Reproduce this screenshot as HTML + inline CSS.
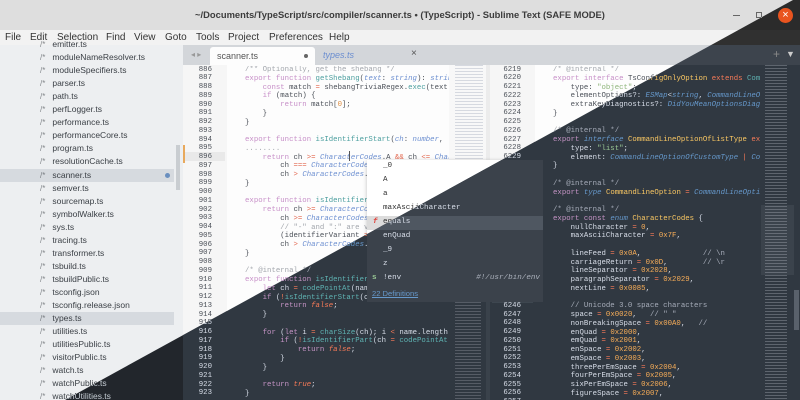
<!DOCTYPE html>
<html><head><meta charset="utf-8"><style>
*{margin:0;padding:0;box-sizing:border-box}
body{width:800px;height:400px;overflow:hidden;position:relative;font-family:"Liberation Sans",sans-serif}
.app{position:absolute;left:0;top:0;width:800px;height:400px;overflow:hidden}
.dark{clip-path:polygon(793px 0,800px 0,800px 400px,65px 400px)}
.abs{position:absolute}
.title{left:0;top:0;width:800px;height:30px;text-align:center;font-weight:bold;font-size:9.4px;line-height:30px}
.menu{left:0;top:30px;width:800px;height:15px;font-size:10px;line-height:15px}
.menu span{position:absolute;top:0}
.side{left:0;top:45px;width:183px;height:355px;font-size:8.5px}
.side div{position:absolute;left:0;width:174px;height:13px;line-height:13px;padding-left:40px;white-space:nowrap}
.side i{font-style:normal;font-size:8px;margin-right:7px;opacity:.6}
.tabs{left:183px;top:45px;width:617px;height:20px;font-size:9px}
.ed{left:183px;top:65px;height:335px}
.code{font-family:"Liberation Mono",monospace;font-size:7.35px;line-height:8.75px;white-space:pre;position:absolute;top:0.6px}
.gut{text-align:right}
.t{font-style:italic}
.pop{left:367px;top:160px;width:176px;height:142px;font-family:"Liberation Mono",monospace;font-size:7.6px}
.pop div{position:absolute;left:0;width:176px;height:13.8px;line-height:13.8px;padding-left:16px;white-space:pre}
.L .title{background:#dedede;color:#3c3c3c}
.L .menu{background:#f2f2f2;color:#333}
.L .side{background:#edeff1;color:#3a3f45}
.L .sel{background:#d6dadf}
.L .tabs{background:#d3d6da;color:#555}
.L .ed{background:#fdfdfd}
.L .gutbg{background:#f6f6f6}
.L .gut{color:#a9a9a9}
.L .code{color:#4b5058}
.L .k{color:#c78fc8}.L .f{color:#4c9f9f}.L .t{color:#6b8ed0}.L .c{color:#a3a7ad}.L .s{color:#8eb57a}.L .n{color:#dd8a3c}.L .o{color:#e2674f}
.L .pop{background:#fff;color:#333;box-shadow:0 1px 4px rgba(0,0,0,.25)}
.L .mini{background:#f8f8f8}
.D .title{background:#2b2b2b;color:#ddd}
.D .menu{background:#303030;color:#ddd}
.D .side{background:#22262c;color:#c5ccd4}
.D .sel{background:#393f47}
.D .tabs{background:#3d444d;color:#bbb}
.D .ed{background:#303841}
.D .gutbg{background:#303841}
.D .gut{color:#7f8893}
.D .code{color:#d8dee9}
.D .k{color:#c594c5}.D .f{color:#5fb3b3}.D .t{color:#6699cc}.D .c{color:#a6acb9}.D .s{color:#99c794}.D .n{color:#f9ae58}.D .o{color:#f97b58}.D .y{color:#fac863}
.D .pop{background:#3b424b;color:#d8dee9}
.D .mini{background:#303841}
</style></head><body>

<div class="app L">
<div class="abs title">~/Documents/TypeScript/src/compiler/scanner.ts • (TypeScript) - Sublime Text (SAFE MODE)</div>
<div class="abs" style="left:733px;top:15px;width:7px;height:1px;background:#666"></div>
<div class="abs" style="left:756px;top:12px;width:6px;height:6px;border:1px solid #666"></div>
<div class="abs" style="left:778px;top:8px;width:15px;height:15px;border-radius:50%;background:#e9541f;color:#fff;font-size:11px;line-height:15px;text-align:center">×</div>
<div class="abs menu"><span style="left:5px">File</span><span style="left:30px">Edit</span><span style="left:57px">Selection</span><span style="left:106px">Find</span><span style="left:134px">View</span><span style="left:165px">Goto</span><span style="left:196px">Tools</span><span style="left:228px">Project</span><span style="left:269px">Preferences</span><span style="left:329px">Help</span></div>
<div class="abs side">
<div style="top:-7px"><i>/*</i>emitter.ts</div>
<div style="top:6px"><i>/*</i>moduleNameResolver.ts</div>
<div style="top:19px"><i>/*</i>moduleSpecifiers.ts</div>
<div style="top:32px"><i>/*</i>parser.ts</div>
<div style="top:45px"><i>/*</i>path.ts</div>
<div style="top:58px"><i>/*</i>perfLogger.ts</div>
<div style="top:71px"><i>/*</i>performance.ts</div>
<div style="top:84px"><i>/*</i>performanceCore.ts</div>
<div style="top:97px"><i>/*</i>program.ts</div>
<div style="top:110px"><i>/*</i>resolutionCache.ts</div>
<div class="sel" style="top:123.5px"><i>/*</i>scanner.ts<b style="position:absolute;left:165px;top:4.5px;width:5px;height:5px;border-radius:50%;background:#6a8fbf"></b></div>
<div style="top:137px"><i>/*</i>semver.ts</div>
<div style="top:150px"><i>/*</i>sourcemap.ts</div>
<div style="top:163px"><i>/*</i>symbolWalker.ts</div>
<div style="top:176px"><i>/*</i>sys.ts</div>
<div style="top:189px"><i>/*</i>tracing.ts</div>
<div style="top:202px"><i>/*</i>transformer.ts</div>
<div style="top:215px"><i>/*</i>tsbuild.ts</div>
<div style="top:228px"><i>/*</i>tsbuildPublic.ts</div>
<div style="top:241px"><i>/*</i>tsconfig.json</div>
<div style="top:254px"><i>/*</i>tsconfig.release.json</div>
<div class="sel" style="top:267px"><i>/*</i>types.ts</div>
<div style="top:280px"><i>/*</i>utilities.ts</div>
<div style="top:293px"><i>/*</i>utilitiesPublic.ts</div>
<div style="top:306px"><i>/*</i>visitorPublic.ts</div>
<div style="top:319px"><i>/*</i>watch.ts</div>
<div style="top:332px"><i>/*</i>watchPublic.ts</div>
<div style="top:345px"><i>/*</i>watchUtilities.ts</div>
<b style="position:absolute;left:176px;top:100px;width:4px;height:45px;background:#c9cdd1"></b>
</div>
<div class="abs tabs">
<span class="abs" style="left:8px;top:5px;font-size:8px;color:#999">◂ ▸</span>
<div class="abs" style="left:27px;top:2px;width:105px;height:18px;background:#fdfdfd;border-radius:3px 3px 0 0"><span class="abs" style="left:7px;top:4px">scanner.ts</span><b class="abs" style="left:94px;top:7px;width:4px;height:4px;border-radius:50%;background:#666"></b></div>
<span class="abs t" style="left:140px;top:5px;font-style:italic">types.ts</span>
<span class="abs" style="left:228px;top:3px;font-size:10px">×</span>
</div>
<div class="abs ed" style="width:617px"></div>
<div class="abs gutbg" style="left:183px;top:65px;width:44px;height:335px"></div>
<div class="abs" style="left:183px;top:152px;width:42px;height:9px;background:#e9e9e9"></div>
<div class="abs" style="left:183px;top:145px;width:2px;height:18px;background:#e8a95c"></div>
<div class="abs code gut" style="left:190px;top:65.6px;width:22px">886
887
888
889
890
891
892
893
894
895
896
897
898
899
900
901
902
903
904
905
906
907
908
909
910
911
912
913
914
915
916
917
918
919
920
921
922
923</div>
<div class="abs" style="left:229px;top:65.6px;width:220px;height:335px;overflow:hidden"><div class="code" style="left:16px"><span class="c">/** Optionally, get the shebang */</span>
<span class="k">export function</span> <span class="f">getShebang</span>(<span class="t">text</span>: <span class="t">string</span>): <span class="t">string</span> | <span class="t">undefined</span> {
    <span class="k">const</span> match <span class="o">=</span> shebangTriviaRegex.<span class="f">exec</span>(text);
    <span class="k">if</span> (match) {
        <span class="k">return</span> match[<span class="n">0</span>];
    }
}

<span class="k">export function</span> <span class="f">isIdentifierStart</span>(<span class="t">ch</span>: <span class="t">number</span>, <span class="t">languageVersion</span>
<span class="c">........</span>
    <span class="k">return</span> ch <span class="o">&gt;=</span> <span class="t">CharacterCodes</span>.A <span class="o">&amp;&amp;</span> ch <span class="o">&lt;=</span> <span class="t">CharacterCodes</span>.Z
        ch <span class="o">===</span> <span class="t">CharacterCodes</span>.$ <span class="o">||</span>
        ch <span class="o">&gt;</span> <span class="t">CharacterCodes</span>.maxAsciiCharacter
}

<span class="k">export function</span> <span class="f">isIdentifierPart</span>(<span class="t">ch</span>: <span class="t">number</span>, <span class="t">languageVersion</span>
    <span class="k">return</span> ch <span class="o">&gt;=</span> <span class="t">CharacterCodes</span>.A <span class="o">&amp;&amp;</span> ch <span class="o">&lt;=</span> <span class="t">CharacterCodes</span>.Z
        ch <span class="o">&gt;=</span> <span class="t">CharacterCodes</span>._0 <span class="o">&amp;&amp;</span> ch <span class="o">&lt;=</span> <span class="t">CharacterCodes</span>._9
        <span class="c">// "-" and ":" are valid in JSX Identifiers</span>
        (identifierVariant <span class="o">===</span> <span class="t">LanguageVariant</span>.JSX
        ch <span class="o">&gt;</span> <span class="t">CharacterCodes</span>.maxAsciiCharacter
}

<span class="c">/* @internal */</span>
<span class="k">export function</span> <span class="f">isIdentifierText</span>(<span class="t">name</span>: <span class="t">string</span>, <span class="t">languageVersion</span>
    <span class="k">let</span> ch <span class="o">=</span> <span class="f">codePointAt</span>(name, <span class="n">0</span>);
    <span class="k">if</span> (<span class="o">!</span><span class="f">isIdentifierStart</span>(ch, languageVersion)) {
        <span class="k">return</span> <span class="n t">false</span>;
    }

    <span class="k">for</span> (<span class="k">let</span> i <span class="o">=</span> <span class="f">charSize</span>(ch); i <span class="o">&lt;</span> name.length; i <span class="o">+=</span> <span class="f">charSize</span>(ch)) {
        <span class="k">if</span> (<span class="o">!</span><span class="f">isIdentifierPart</span>(ch <span class="o">=</span> <span class="f">codePointAt</span>(name, i), languageVersion
            <span class="k">return</span> <span class="n t">false</span>;
        }
    }

    <span class="k">return</span> <span class="n t">true</span>;
}</div></div>
<div class="abs" style="left:349px;top:151px;width:1px;height:10px;background:#555"></div>
<div class="abs mini" style="left:449px;top:65px;width:37px;height:335px;background-image:repeating-linear-gradient(180deg,rgba(150,160,180,.35) 0 1px,transparent 1px 3px);background-size:28px 335px;background-repeat:no-repeat;background-position:6px 0"></div>
<div class="abs" style="left:486px;top:65px;width:4px;height:335px;background:#ececec"></div>
<div class="abs gutbg" style="left:490px;top:65px;width:45px;height:335px"></div>
<div class="abs" style="left:490px;top:294px;width:45px;height:9px;background:#e9e9e9"></div>
<div class="abs code gut" style="left:496px;top:65.6px;width:25px">6219
6220
6221
6222
6223
6224
6225
6226
6227
6228
6229
6230
6231
6232
6233
6234
6235
6236
6237
6238
6239
6240
6241
6242
6243
6244
6245
6246
6247
6248
6249
6250
6251
6252
6253
6254
6255
6256
6257</div>
<div class="abs" style="left:553px;top:65.6px;width:207px;height:335px;overflow:hidden"><div class="code" style="left:0"><span class="c">/* @internal */</span>
<span class="k">export interface</span> <span class="y">TsConfigOnlyOption</span> <span class="o">extends</span> <span class="f">CommandLineOptionBase</span>
    type: <span class="s">"object"</span>;
    elementOptions?: <span class="t">ESMap</span>&lt;<span class="t">string</span>, <span class="t">CommandLineOption</span>&gt;;
    extraKeyDiagnostics?: <span class="t">DidYouMeanOptionsDiagnostics</span>;
}

<span class="c">/* @internal */</span>
<span class="k">export interface</span> <span class="y">CommandLineOptionOfListType</span> <span class="o">extends</span>
    type: <span class="s">"list"</span>;
    element: <span class="t">CommandLineOptionOfCustomType</span> <span class="o">|</span> <span class="t">CommandLine</span>
}

<span class="c">/* @internal */</span>
<span class="k">export type</span> <span class="y">CommandLineOption</span> <span class="o">=</span> <span class="t">CommandLineOptionOfCustomType</span>

<span class="c">/* @internal */</span>
<span class="k">export const enum</span> <span class="y">CharacterCodes</span> {
    nullCharacter <span class="o">=</span> <span class="n">0</span>,
    maxAsciiCharacter <span class="o">=</span> <span class="n">0x7F</span>,

    lineFeed <span class="o">=</span> <span class="n">0x0A</span>,              <span class="c">// \n</span>
    carriageReturn <span class="o">=</span> <span class="n">0x0D</span>,        <span class="c">// \r</span>
    lineSeparator <span class="o">=</span> <span class="n">0x2028</span>,
    paragraphSeparator <span class="o">=</span> <span class="n">0x2029</span>,
    nextLine <span class="o">=</span> <span class="n">0x0085</span>,

    <span class="c">// Unicode 3.0 space characters</span>
    space <span class="o">=</span> <span class="n">0x0020</span>,   <span class="c">// " "</span>
    nonBreakingSpace <span class="o">=</span> <span class="n">0x00A0</span>,   <span class="c">//</span>
    enQuad <span class="o">=</span> <span class="n">0x2000</span>,
    emQuad <span class="o">=</span> <span class="n">0x2001</span>,
    enSpace <span class="o">=</span> <span class="n">0x2002</span>,
    emSpace <span class="o">=</span> <span class="n">0x2003</span>,
    threePerEmSpace <span class="o">=</span> <span class="n">0x2004</span>,
    fourPerEmSpace <span class="o">=</span> <span class="n">0x2005</span>,
    sixPerEmSpace <span class="o">=</span> <span class="n">0x2006</span>,
    figureSpace <span class="o">=</span> <span class="n">0x2007</span>,</div></div>
<div class="abs mini" style="left:761px;top:65px;width:33px;height:335px;background-image:repeating-linear-gradient(180deg,rgba(150,160,180,.45) 0 1px,transparent 1px 3px);background-size:22px 335px;background-repeat:no-repeat;background-position:4px 0"></div>
<div class="abs" style="left:794px;top:290px;width:5px;height:40px;background:#ccc"></div>
<div class="abs pop">
<div style="top:0">_0</div><div style="top:14px">A</div><div style="top:28px">a</div><div style="top:42px">maxAsciiCharacter</div>
<div style="top:56px;background:#dcdcdc"><b style="position:absolute;left:6px;color:#e0433d;font-style:italic">f</b>equals</div>
<div style="top:70px">enQuad</div><div style="top:84px">_9</div><div style="top:98px">z</div>
<div style="top:112px"><b style="position:absolute;left:5px;color:#6aa84f">s</b>!env<span style="position:absolute;right:3px;font-style:italic;opacity:.7">#!/usr/bin/env</span></div>
<div style="top:127px;padding-left:5px;font-family:'Liberation Sans',sans-serif;color:#5b8fd0;text-decoration:underline">22 Definitions</div>
</div>
</div>

<div class="app D dark">
<div class="abs title">~/Documents/TypeScript/src/compiler/scanner.ts • (TypeScript) - Sublime Text (SAFE MODE)</div>
<div class="abs" style="left:733px;top:15px;width:7px;height:1px;background:#bbb"></div>
<div class="abs" style="left:756px;top:12px;width:6px;height:6px;border:1px solid #bbb"></div>
<div class="abs" style="left:778px;top:8px;width:15px;height:15px;border-radius:50%;background:#e9541f;color:#fff;font-size:11px;line-height:15px;text-align:center">×</div>
<div class="abs menu"></div>
<div class="abs side">
<div style="top:306px"><i>/*</i>visitorPublic.ts</div>
<div style="top:319px"><i>/*</i>watch.ts</div>
<div style="top:332px"><i>/*</i>watchPublic.ts</div>
<div style="top:345px"><i>/*</i>watchUtilities.ts</div>
</div>
<div class="abs tabs"><span class="abs" style="left:590px;top:2px;font-size:12px;color:#888">+</span><span class="abs" style="left:603px;top:4px;font-size:9px;color:#ccc">▼</span></div>
<div class="abs ed" style="width:617px"></div>
<div class="abs gutbg" style="left:183px;top:65px;width:44px;height:335px"></div>
<div class="abs code gut" style="left:190px;top:65.6px;width:22px">886
887
888
889
890
891
892
893
894
895
896
897
898
899
900
901
902
903
904
905
906
907
908
909
910
911
912
913
914
915
916
917
918
919
920
921
922
923</div>
<div class="abs" style="left:229px;top:65.6px;width:220px;height:335px;overflow:hidden"><div class="code" style="left:16px">









    <span class="k">return</span> ch <span class="o">&gt;=</span> <span class="t">CharacterCodes</span>.A <span class="o">&amp;&amp;</span> ch <span class="o">&lt;=</span> <span class="t">CharacterCodes</span>.Z
        ch <span class="o">===</span> <span class="t">CharacterCodes</span>.$ <span class="o">||</span>
        ch <span class="o">&gt;</span> <span class="t">CharacterCodes</span>.maxAsciiCharacter
}

<span class="k">export function</span> <span class="f">isIdentifierPart</span>(<span class="t">ch</span>: <span class="t">number</span>, <span class="t">languageVersion</span>
    <span class="k">return</span> ch <span class="o">&gt;=</span> <span class="t">CharacterCodes</span>.A <span class="o">&amp;&amp;</span> ch <span class="o">&lt;=</span> <span class="t">CharacterCodes</span>.Z
        ch <span class="o">&gt;=</span> <span class="t">CharacterCodes</span>._0 <span class="o">&amp;&amp;</span> ch <span class="o">&lt;=</span> <span class="t">CharacterCodes</span>._9
        <span class="c">// "-" and ":" are valid in JSX Identifiers</span>
        (identifierVariant <span class="o">===</span> <span class="t">LanguageVariant</span>.JSX
        ch <span class="o">&gt;</span> <span class="t">CharacterCodes</span>.maxAsciiCharacter
}

<span class="c">/* @internal */</span>
<span class="k">export function</span> <span class="f">isIdentifierText</span>(<span class="t">name</span>: <span class="t">string</span>, <span class="t">languageVersion</span>
    <span class="k">let</span> ch <span class="o">=</span> <span class="f">codePointAt</span>(name, <span class="n">0</span>);
    <span class="k">if</span> (<span class="o">!</span><span class="f">isIdentifierStart</span>(ch, languageVersion)) {
        <span class="k">return</span> <span class="o t">false</span>;
    }

    <span class="k">for</span> (<span class="k">let</span> i <span class="o">=</span> <span class="f">charSize</span>(ch); i <span class="o">&lt;</span> name.length; i <span class="o">+=</span> <span class="f">charSize</span>(ch)) {
        <span class="k">if</span> (<span class="o">!</span><span class="f">isIdentifierPart</span>(ch <span class="o">=</span> <span class="f">codePointAt</span>(name, i), languageVersion
            <span class="k">return</span> <span class="o t">false</span>;
        }
    }

    <span class="k">return</span> <span class="o t">true</span>;
}</div></div>
<div class="abs mini" style="left:449px;top:65px;width:37px;height:335px;background-image:repeating-linear-gradient(180deg,rgba(200,200,210,.25) 0 1px,transparent 1px 3px);background-size:26px 335px;background-repeat:no-repeat;background-position:6px 0"></div>
<div class="abs" style="left:486px;top:65px;width:4px;height:335px;background:#3a424b"></div>
<div class="abs gutbg" style="left:490px;top:65px;width:45px;height:335px"></div>
<div class="abs" style="left:492px;top:294px;width:41px;height:9px;background:#3e4750"></div>
<div class="abs code gut" style="left:496px;top:65.6px;width:25px">6219
6220
6221
6222
6223
6224
6225
6226
6227
6228
6229
6230
6231
6232
6233
6234
6235
6236
6237
6238
6239
6240
6241
6242
6243
6244
6245
6246
6247
6248
6249
6250
6251
6252
6253
6254
6255
6256
6257</div>
<div class="abs" style="left:553px;top:65.6px;width:207px;height:335px;overflow:hidden"><div class="code" style="left:0"><span class="c">/* @internal */</span>
<span class="k">export</span> <span class="k t">interface</span> <span class="y">TsConfigOnlyOption</span> <span class="o">extends</span> <span class="f">CommandLineOptionBase</span>
    type: <span class="s">"object"</span>;
    elementOptions?: <span class="t">ESMap</span>&lt;<span class="t">string</span>, <span class="t">CommandLineOption</span>&gt;;
    extraKeyDiagnostics?: <span class="t">DidYouMeanOptionsDiagnostics</span>;
}

<span class="c">/* @internal */</span>
<span class="k">export</span> <span class="k t">interface</span> <span class="y">CommandLineOptionOfListType</span> <span class="o">extends</span>
    type: <span class="s">"list"</span>;
    element: <span class="t">CommandLineOptionOfCustomType</span> <span class="o">|</span> <span class="t">CommandLine</span>
}

<span class="c">/* @internal */</span>
<span class="k">export</span> <span class="k t">type</span> <span class="y">CommandLineOption</span> <span class="o">=</span> <span class="t">CommandLineOptionOfCustomType</span>

<span class="c">/* @internal */</span>
<span class="k">export const</span> <span class="k t">enum</span> <span class="y">CharacterCodes</span> {
    nullCharacter <span class="o">=</span> <span class="n">0</span>,
    maxAsciiCharacter <span class="o">=</span> <span class="n">0x7F</span>,

    lineFeed <span class="o">=</span> <span class="n">0x0A</span>,              <span class="c">// \n</span>
    carriageReturn <span class="o">=</span> <span class="n">0x0D</span>,        <span class="c">// \r</span>
    lineSeparator <span class="o">=</span> <span class="n">0x2028</span>,
    paragraphSeparator <span class="o">=</span> <span class="n">0x2029</span>,
    nextLine <span class="o">=</span> <span class="n">0x0085</span>,

    <span class="c">// Unicode 3.0 space characters</span>
    space <span class="o">=</span> <span class="n">0x0020</span>,   <span class="c">// " "</span>
    nonBreakingSpace <span class="o">=</span> <span class="n">0x00A0</span>,   <span class="c">//</span>
    enQuad <span class="o">=</span> <span class="n">0x2000</span>,
    emQuad <span class="o">=</span> <span class="n">0x2001</span>,
    enSpace <span class="o">=</span> <span class="n">0x2002</span>,
    emSpace <span class="o">=</span> <span class="n">0x2003</span>,
    threePerEmSpace <span class="o">=</span> <span class="n">0x2004</span>,
    fourPerEmSpace <span class="o">=</span> <span class="n">0x2005</span>,
    sixPerEmSpace <span class="o">=</span> <span class="n">0x2006</span>,
    figureSpace <span class="o">=</span> <span class="n">0x2007</span>,</div></div>
<div class="abs mini" style="left:761px;top:65px;width:33px;height:335px;background-image:repeating-linear-gradient(180deg,rgba(200,205,215,.3) 0 1px,transparent 1px 3px),linear-gradient(#3b434c,#3b434c);background-size:22px 335px,33px 70px;background-repeat:no-repeat;background-position:4px 0,0 140px"></div>
<div class="abs" style="left:794px;top:290px;width:5px;height:40px;background:#59616b"></div>
<div class="abs pop">
<div style="top:0">_0</div><div style="top:14px">A</div><div style="top:28px">a</div><div style="top:42px">maxAsciiCharacter</div>
<div style="top:56px;background:#4f5761"><b style="position:absolute;left:6px;color:#ec5f67;font-style:italic">f</b>equals</div>
<div style="top:70px">enQuad</div><div style="top:84px">_9</div><div style="top:98px">z</div>
<div style="top:112px"><b style="position:absolute;left:5px;color:#99c794">s</b>!env<span style="position:absolute;right:3px;font-style:italic;opacity:.7">#!/usr/bin/env</span></div>
<div style="top:127px;padding-left:5px;font-family:'Liberation Sans',sans-serif;color:#6699cc;text-decoration:underline">22 Definitions</div>
</div>
</div>
</body></html>
